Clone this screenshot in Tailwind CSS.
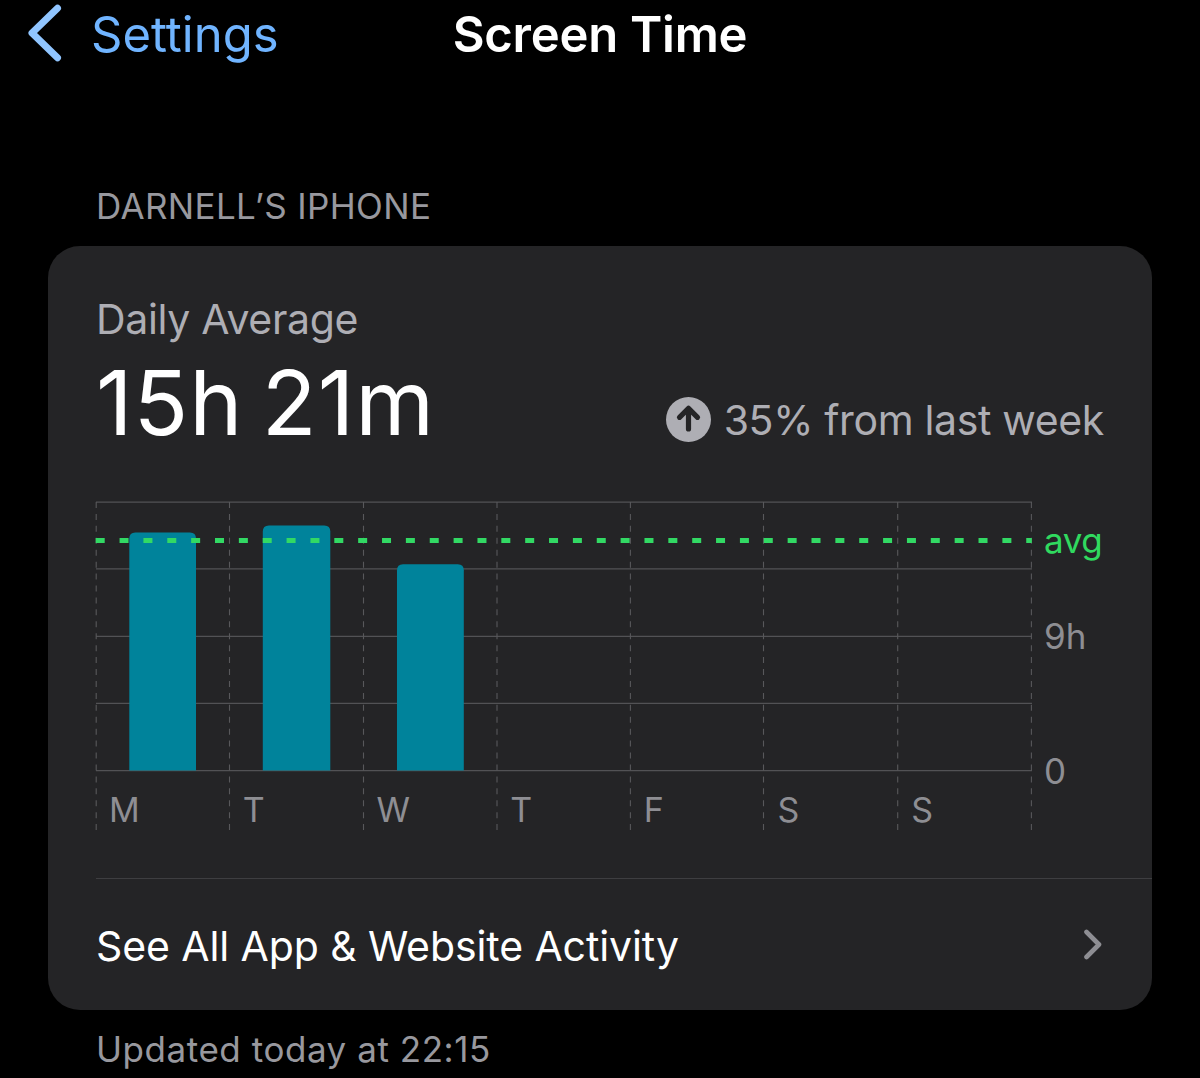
<!DOCTYPE html>
<html lang="en">
<head>
    <meta charset="UTF-8">
    <meta name="viewport" content="width=device-width, initial-scale=1.0">
    <title>Screen Time</title>
    <script src="https://cdn.jsdelivr.net/npm/@tailwindcss/browser@4"></script>
</head>
<body class="bg-black text-white font-[Inter,Roboto,sans-serif] h-[1078px] overflow-hidden">
    <!-- Navigation bar -->
    <header class="grid grid-cols-[1fr_auto_1fr] items-center pt-[5px] pl-7 pr-7 text-[49px] leading-[60px]">
        <a href="#" class="flex items-center text-[#70b4ff]">
            <svg class="w-[34px] h-[58px] mr-[29px] -mt-[5px] shrink-0" viewBox="0 0 34 58" fill="none" stroke="#90c5ff" stroke-width="7" stroke-linecap="round" stroke-linejoin="round">
                <path d="M29.5 4.2 L4 29 L29.5 53.8"/>
            </svg>
            Settings
        </a>
        <h1 class="font-semibold tracking-[-0.25px]">Screen Time</h1>
        <span></span>
    </header>

    <main class="px-12">
        <h2 class="mt-[120px] px-12 text-[35px] leading-[42px] tracking-[0.35px] text-[#98989e] uppercase">Darnell’s iPhone</h2>

        <section class="mt-[19px] h-[764px] rounded-[32px] bg-[#242426] pl-12 flex flex-col">
            <!-- Summary -->
            <div class="pt-12 pr-12">
                <p class="text-[41px] leading-[50px] tracking-[-0.33px] text-[#aeaeb4]">Daily Average</p>
                <div class="mt-1 flex items-baseline justify-between">
                    <p class="text-[90px] leading-[109px] tracking-[1px] [word-spacing:-8px]">15h 21m</p>
                    <p class="flex items-baseline text-[41px] leading-[50px] tracking-[-0.35px] text-[#aeaeb4]">
                        <svg class="w-[45px] h-[45px] mr-[13px] self-center -mt-px" viewBox="0 0 45 45" fill="none">
                            <circle cx="22.5" cy="22.5" r="22.5" fill="#aeaeb4"/>
                            <path d="M22.5 32 V12 M13.5 20.3 L22.5 11.3 L31.5 20.3" stroke="#242426" stroke-width="5.2" stroke-linecap="round" stroke-linejoin="round"/>
                        </svg>
                        35% from last week
                    </p>
                </div>
            </div>

            <!-- Weekly chart -->
            <div class="mt-11 flex h-[330px] text-[35px] leading-[42px] text-[#8e8e93]">
                <div class="relative w-[936px] shrink-0">
                    <svg class="absolute inset-0 overflow-visible" width="936" height="330" viewBox="0 0 936 330" fill="none">
                        <path d="M0 1.2 H936 M0 67.8 H936 M0 135.3 H936 M0 202.3 H936 M0 269.7 H936" stroke="#525255" stroke-width="1.2"/>
                        <path d="M.2 1 V330 M133.5 1 V330 M267.5 1 V330 M401 1 V330 M534.4 1 V330 M667.5 1 V330 M801.7 1 V330 M935.4 1 V330" stroke="#58585b" stroke-width="1.1" stroke-dasharray="6 5.93"/>
                        <g fill="#00839b">
                            <path d="M33.3 269.5 V37.5 q0 -6 6 -6 H94 q6 0 6 6 V269.5 Z"/>
                            <path d="M166.8 269.5 V30.5 q0 -6 6 -6 H228.3 q6 0 6 6 V269.5 Z"/>
                            <path d="M301 269.5 V69.3 q0 -6 6 -6 H361.8 q6 0 6 6 V269.5 Z"/>
                        </g>
                        <path d="M-.3 39.5 H935.8" stroke="#32d964" stroke-width="4.8" stroke-dasharray="9 14.86"/>
                    </svg>
                    <div class="relative grid grid-cols-7 pt-[288px] text-[34px]">
                        <span class="pl-[13px]">M</span>
                        <span class="pl-[13px]">T</span>
                        <span class="pl-[13px]">W</span>
                        <span class="pl-[13px]">T</span>
                        <span class="pl-[13px]">F</span>
                        <span class="pl-[13px]">S</span>
                        <span class="pl-[13px]">S</span>
                    </div>
                </div>
                <div class="pl-3 pt-[18px] flex flex-col">
                    <span class="text-[#30d95f] tracking-[-0.5px]">avg</span>
                    <span class="mt-[54px]">9h</span>
                    <span class="mt-[93px]">0</span>
                </div>
            </div>

            <!-- Activity link -->
            <a href="#" class="mt-[47px] flex-1 border-t border-[#3e3e41] pt-[3px] pr-[50px] flex items-center justify-between text-[41px] leading-[50px] tracking-[-0.1px]">
                See All App &amp; Website Activity
                <svg class="w-[19px] h-[31px] -mt-[3px]" viewBox="0 0 19 31" fill="none" stroke="#8e8e93" stroke-width="4.6" stroke-linecap="round" stroke-linejoin="round">
                    <path d="M3.5 3 L16 15.5 L3.5 28"/>
                </svg>
            </a>
        </section>

        <p class="mt-[18px] px-12 text-[35px] leading-[42px] tracking-[0.55px] text-[#98989e]">Updated today at 22:15</p>
    </main>
</body>
</html>
